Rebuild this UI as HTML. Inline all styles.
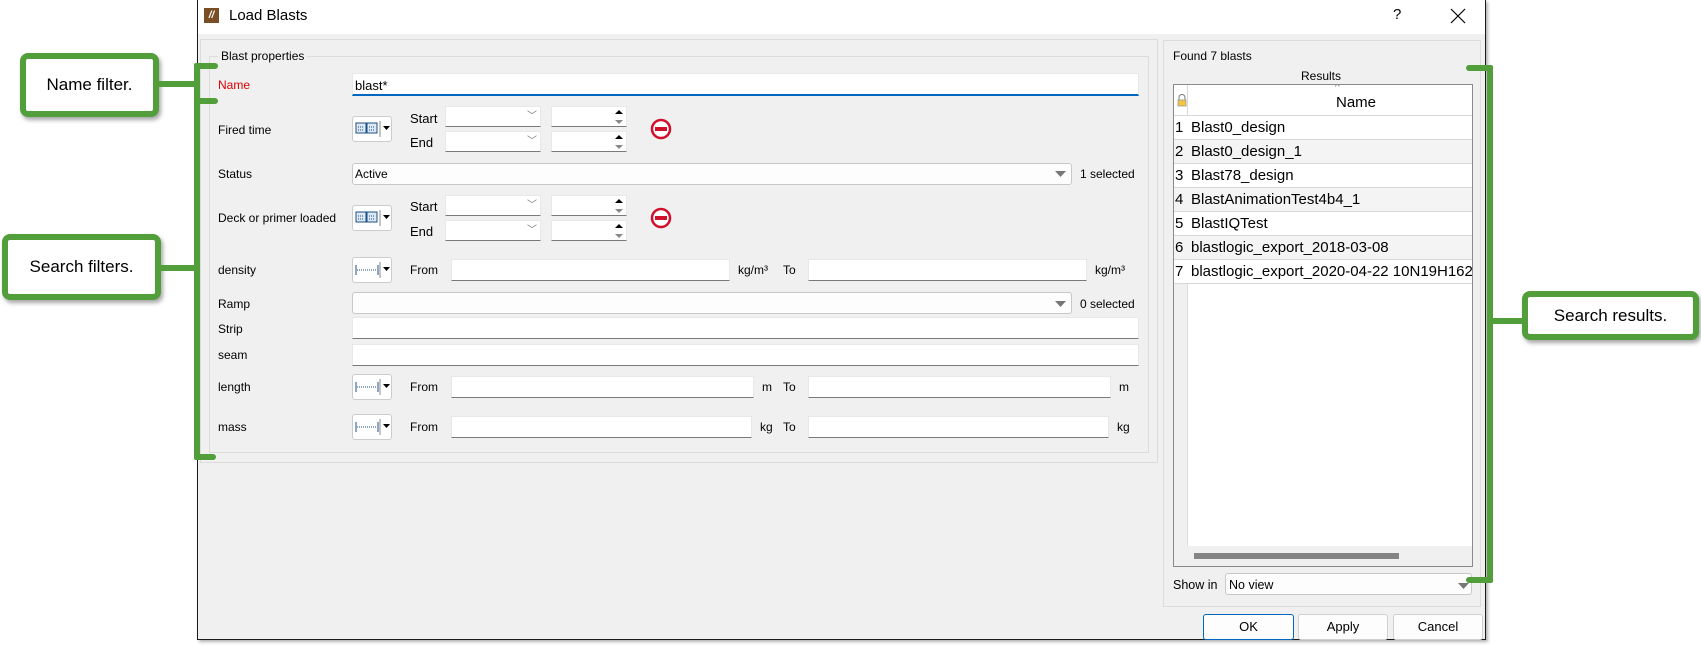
<!DOCTYPE html>
<html><head><meta charset="utf-8"><style>
*{box-sizing:border-box;margin:0;padding:0}
body{width:1701px;height:646px;background:#fff;position:relative;overflow:hidden;font-family:"Liberation Sans",sans-serif;font-size:12px;color:#000}
.a{position:absolute}
.in{position:absolute;background:#fff;border-bottom:1px solid #7a7a7a;border-top:1px solid #e8e8e8;border-left:1px solid #e8e8e8;border-right:1px solid #e8e8e8}
.cb{position:absolute;background:#fdfdfd;border:1px solid #c8c8c8;border-radius:3px}
.lbl{position:absolute;font-size:12px}
.g{position:absolute;background:#529e3a}
.box{position:absolute;background:#fff;border:6px solid #529e3a;border-radius:8px;box-shadow:2px 3px 4px rgba(0,0,0,.35);font-size:17px;display:flex;align-items:center;justify-content:center}
.btnu{position:absolute;width:40px;height:26px;background:#fff;border:1px solid #ccc;border-radius:3px}
.btn{position:absolute;background:#fdfdfd;border:1px solid #d0d0d0;border-radius:3px;font-size:13px;text-align:center;line-height:24px}
.row{position:absolute;left:0;width:308px;height:24px;border-bottom:1px solid #d8d8d8;font-size:15px;line-height:24px}
.row span{position:absolute;left:1px}
.row b{font-weight:normal;position:absolute;left:17px;white-space:nowrap}
</style></head><body>
<!-- dialog -->
<div class="a" style="left:197px;top:0;width:1289px;height:640px;background:#f0f0f0;border:1px solid #1a1a1a;border-top:none;box-shadow:2px 2px 3px rgba(0,0,0,.3)"></div>
<div class="a" style="left:198px;top:0;width:1287px;height:34px;background:#fff"></div>
<div class="a" style="left:204px;top:8px;width:15px;height:15px;background:#7a4e24;color:#fff;font-size:10px;font-weight:bold;font-style:italic;line-height:15px;text-align:center">//</div>
<div class="a" style="left:229px;top:7px;font-size:15px">Load Blasts</div>
<div class="a" style="left:1393px;top:6px;font-size:15px">?</div>
<svg class="a" style="left:1450px;top:8px" width="16" height="16"><path d="M1 1L15 15M15 1L1 15" stroke="#000" stroke-width="1.2"/></svg>
<!-- main left frame -->
<div class="a" style="left:200px;top:39px;width:958px;height:424px;border:1px solid #dcdcdc"></div>
<div class="a" style="left:209px;top:56px;width:940px;height:397px;border:1px solid #dcdcdc"></div>
<div class="a" style="left:218px;top:49px;background:#f0f0f0;padding:0 3px;font-size:12px">Blast properties</div>
<!-- Name -->
<div class="lbl" style="left:218px;top:78px;color:#e00000">Name</div>
<div class="in" style="left:352px;top:73px;width:787px;height:23px;border-bottom:2px solid #0067c0"></div>
<div class="lbl" style="left:355px;top:78px;font-size:13px">blast*</div>
<!-- Fired time -->
<div class="lbl" style="left:218px;top:123px">Fired time</div>
<div class="btnu" style="left:352px;top:116px"></div>
<svg class="a" style="left:355px;top:121px" width="36" height="16"><rect x="1" y="2" width="10" height="10" fill="#dce8f4" stroke="#1c4f85"/><rect x="12" y="2" width="10" height="10" fill="#dce8f4" stroke="#1c4f85"/><path d="M3 6h6M3 9h6M14 6h6M14 9h6" stroke="#1c4f85" stroke-dasharray="1 1"/><path d="M25 0v16" stroke="#888"/><path d="M28 5h7l-3.5 4z" fill="#000"/></svg>
<div class="lbl" style="left:410px;top:111px;font-size:13px">Start</div>
<div class="lbl" style="left:410px;top:135px;font-size:13px">End</div>
<div class="in" style="left:445px;top:106px;width:96px;height:21px"></div><div class="a" style="left:527px;top:107px;color:#777;font-size:10px">﹀</div>
<div class="in" style="left:445px;top:131px;width:96px;height:21px"></div><div class="a" style="left:527px;top:132px;color:#777;font-size:10px">﹀</div>
<div class="in" style="left:551px;top:106px;width:76px;height:21px"></div>
<div class="in" style="left:551px;top:131px;width:76px;height:21px"></div>
<svg class="a" style="left:612px;top:107px" width="14" height="46"><path d="M3 7l4-4 4 4z" fill="#000"/><path d="M3 13l4 4 4-4z" fill="#888"/><path d="M3 32l4-4 4 4z" fill="#000"/><path d="M3 38l4 4 4-4z" fill="#888"/></svg>
<svg class="a" style="left:650px;top:118px" width="22" height="22"><circle cx="11" cy="11" r="9" fill="#fff" stroke="#d0102a" stroke-width="2.5"/><rect x="5" y="9" width="12" height="4" fill="#d0102a"/></svg>
<!-- Status -->
<div class="lbl" style="left:218px;top:167px">Status</div>
<div class="cb" style="left:352px;top:163px;width:720px;height:22px"></div>
<div class="lbl" style="left:355px;top:167px">Active</div>
<svg class="a" style="left:1055px;top:170px" width="12" height="8"><path d="M0 1h11l-5.5 6z" fill="#777"/></svg>
<div class="lbl" style="left:1080px;top:167px">1 selected</div>
<!-- Deck -->
<div class="lbl" style="left:218px;top:211px">Deck or primer loaded</div>
<div class="btnu" style="left:352px;top:205px"></div>
<svg class="a" style="left:355px;top:210px" width="36" height="16"><rect x="1" y="2" width="10" height="10" fill="#dce8f4" stroke="#1c4f85"/><rect x="12" y="2" width="10" height="10" fill="#dce8f4" stroke="#1c4f85"/><path d="M3 6h6M3 9h6M14 6h6M14 9h6" stroke="#1c4f85" stroke-dasharray="1 1"/><path d="M25 0v16" stroke="#888"/><path d="M28 5h7l-3.5 4z" fill="#000"/></svg>
<div class="lbl" style="left:410px;top:199px;font-size:13px">Start</div>
<div class="lbl" style="left:410px;top:224px;font-size:13px">End</div>
<div class="in" style="left:445px;top:195px;width:96px;height:21px"></div><div class="a" style="left:527px;top:196px;color:#777;font-size:10px">﹀</div>
<div class="in" style="left:445px;top:220px;width:96px;height:21px"></div><div class="a" style="left:527px;top:221px;color:#777;font-size:10px">﹀</div>
<div class="in" style="left:551px;top:195px;width:76px;height:21px"></div>
<div class="in" style="left:551px;top:220px;width:76px;height:21px"></div>
<svg class="a" style="left:612px;top:196px" width="14" height="46"><path d="M3 7l4-4 4 4z" fill="#000"/><path d="M3 13l4 4 4-4z" fill="#888"/><path d="M3 32l4-4 4 4z" fill="#000"/><path d="M3 38l4 4 4-4z" fill="#888"/></svg>
<svg class="a" style="left:650px;top:207px" width="22" height="22"><circle cx="11" cy="11" r="9" fill="#fff" stroke="#d0102a" stroke-width="2.5"/><rect x="5" y="9" width="12" height="4" fill="#d0102a"/></svg>
<!-- unit rows -->
<div class="lbl" style="left:218px;top:263px">density</div>
<div class="btnu" style="left:352px;top:257px"></div>
<svg class="a" style="left:355px;top:262px" width="36" height="16"><path d="M1 3v10M23 3v10" stroke="#1c4f85"/><path d="M2 8h20" stroke="#1c4f85" stroke-dasharray="1 1"/><path d="M25 0v16" stroke="#888"/><path d="M28 5h7l-3.5 4z" fill="#000"/></svg>
<div class="lbl" style="left:410px;top:263px">From</div>
<div class="in" style="left:451px;top:259px;width:279px;height:22px"></div>
<div class="lbl" style="left:738px;top:263px">kg/m³</div>
<div class="lbl" style="left:783px;top:263px">To</div>
<div class="in" style="left:808px;top:259px;width:279px;height:22px"></div>
<div class="lbl" style="left:1095px;top:263px">kg/m³</div>

<div class="lbl" style="left:218px;top:297px">Ramp</div>
<div class="cb" style="left:352px;top:292px;width:720px;height:22px"></div>
<svg class="a" style="left:1055px;top:300px" width="12" height="8"><path d="M0 1h11l-5.5 6z" fill="#777"/></svg>
<div class="lbl" style="left:1080px;top:297px">0 selected</div>

<div class="lbl" style="left:218px;top:322px">Strip</div>
<div class="in" style="left:352px;top:317px;width:787px;height:22px"></div>
<div class="lbl" style="left:218px;top:348px">seam</div>
<div class="in" style="left:352px;top:344px;width:787px;height:22px"></div>

<div class="lbl" style="left:218px;top:380px">length</div>
<div class="btnu" style="left:352px;top:374px"></div>
<svg class="a" style="left:355px;top:379px" width="36" height="16"><path d="M1 3v10M23 3v10" stroke="#1c4f85"/><path d="M2 8h20" stroke="#1c4f85" stroke-dasharray="1 1"/><path d="M25 0v16" stroke="#888"/><path d="M28 5h7l-3.5 4z" fill="#000"/></svg>
<div class="lbl" style="left:410px;top:380px">From</div>
<div class="in" style="left:451px;top:376px;width:303px;height:22px"></div>
<div class="lbl" style="left:762px;top:380px">m</div>
<div class="lbl" style="left:783px;top:380px">To</div>
<div class="in" style="left:808px;top:376px;width:303px;height:22px"></div>
<div class="lbl" style="left:1119px;top:380px">m</div>

<div class="lbl" style="left:218px;top:420px">mass</div>
<div class="btnu" style="left:352px;top:414px"></div>
<svg class="a" style="left:355px;top:419px" width="36" height="16"><path d="M1 3v10M23 3v10" stroke="#1c4f85"/><path d="M2 8h20" stroke="#1c4f85" stroke-dasharray="1 1"/><path d="M25 0v16" stroke="#888"/><path d="M28 5h7l-3.5 4z" fill="#000"/></svg>
<div class="lbl" style="left:410px;top:420px">From</div>
<div class="in" style="left:451px;top:416px;width:301px;height:22px"></div>
<div class="lbl" style="left:760px;top:420px">kg</div>
<div class="lbl" style="left:783px;top:420px">To</div>
<div class="in" style="left:808px;top:416px;width:301px;height:22px"></div>
<div class="lbl" style="left:1117px;top:420px">kg</div>

<!-- right panel -->
<div class="a" style="left:1163px;top:40px;width:318px;height:567px;border:1px solid #dcdcdc"></div>
<div class="lbl" style="left:1173px;top:49px">Found 7 blasts</div>
<div class="lbl" style="left:1301px;top:69px">Results</div>
<div class="a" style="left:1173px;top:84px;width:300px;height:483px;border:1px solid #8a8a8a;background:#fff;overflow:hidden">
  <div class="a" style="left:0;top:0;width:13px;height:483px;background:#f0f0f0"></div>
  <div class="a" style="left:13px;top:0;width:1px;height:483px;background:#dcdcdc"></div>
  <div class="a" style="left:0;top:0;width:300px;height:31px;background:#fff;border-bottom:1px solid #d8d8d8"></div>
  <div class="a" style="left:13px;top:0;width:1px;height:31px;background:#d8d8d8"></div>
  <svg class="a" style="left:3px;top:9px" width="10" height="13"><path d="M2 6V3.5a3 3 0 0 1 6 0V6" fill="none" stroke="#777"/><rect x="1" y="6" width="8" height="6" fill="#f5c542" stroke="#999" stroke-width=".8"/></svg>
  <div class="a" style="left:161px;top:-3px;font-size:10px;color:#666">^</div>
  <div class="a" style="left:162px;top:9px;font-size:15px">Name</div>
  <div class="row" style="top:31px;background:#fff"><span>1</span><b>Blast0_design</b></div>
  <div class="row" style="top:55px;background:#f4f4f4"><span>2</span><b>Blast0_design_1</b></div>
  <div class="row" style="top:79px;background:#fff"><span>3</span><b>Blast78_design</b></div>
  <div class="row" style="top:103px;background:#f4f4f4"><span>4</span><b>BlastAnimationTest4b4_1</b></div>
  <div class="row" style="top:127px;background:#fff"><span>5</span><b>BlastIQTest</b></div>
  <div class="row" style="top:151px;background:#f4f4f4"><span>6</span><b>blastlogic_export_2018-03-08</b></div>
  <div class="row" style="top:175px;background:#fff"><span>7</span><b>blastlogic_export_2020-04-22 10N19H162_</b></div>
  <div class="a" style="left:0;top:461px;width:300px;height:22px;background:#f0f0f0"></div>
  <div class="a" style="left:20px;top:468px;width:205px;height:6px;background:#858585"></div>
</div>
<div class="lbl" style="left:1173px;top:578px;font-size:12.5px">Show in</div>
<div class="cb" style="left:1225px;top:573px;width:247px;height:22px"></div>
<div class="lbl" style="left:1229px;top:578px;font-size:12.5px">No view</div>
<svg class="a" style="left:1458px;top:582px" width="12" height="8"><path d="M0 1h11l-5.5 6z" fill="#777"/></svg>
<!-- buttons -->
<div class="btn" style="left:1203px;top:614px;width:91px;height:26px;border:1px solid #0067c0">OK</div>
<div class="btn" style="left:1298px;top:614px;width:90px;height:26px">Apply</div>
<div class="btn" style="left:1393px;top:614px;width:90px;height:26px">Cancel</div>

<!-- callouts -->
<div class="box" style="left:20px;top:53px;width:139px;height:64px">Name filter.</div>
<div class="box" style="left:2px;top:234px;width:159px;height:66px">Search filters.</div>
<div class="box" style="left:1522px;top:291px;width:177px;height:49px">Search results.</div>
<div class="g" style="left:158px;top:81px;width:40px;height:6px"></div>
<div class="g" style="left:160px;top:265px;width:38px;height:6px"></div>
<div class="g" style="left:194px;top:63px;width:6px;height:397px;border-radius:2px"></div>
<div class="g" style="left:194px;top:63px;width:24px;height:6px;border-radius:3px"></div>
<div class="g" style="left:194px;top:98px;width:24px;height:6px;border-radius:3px"></div>
<div class="g" style="left:194px;top:454px;width:22px;height:6px;border-radius:3px"></div>
<div class="g" style="left:1487px;top:65px;width:6px;height:518px;border-radius:2px"></div>
<div class="g" style="left:1466px;top:65px;width:27px;height:6px;border-radius:3px"></div>
<div class="g" style="left:1466px;top:577px;width:27px;height:6px;border-radius:3px"></div>
<div class="g" style="left:1490px;top:318px;width:34px;height:6px"></div>
</body></html>
